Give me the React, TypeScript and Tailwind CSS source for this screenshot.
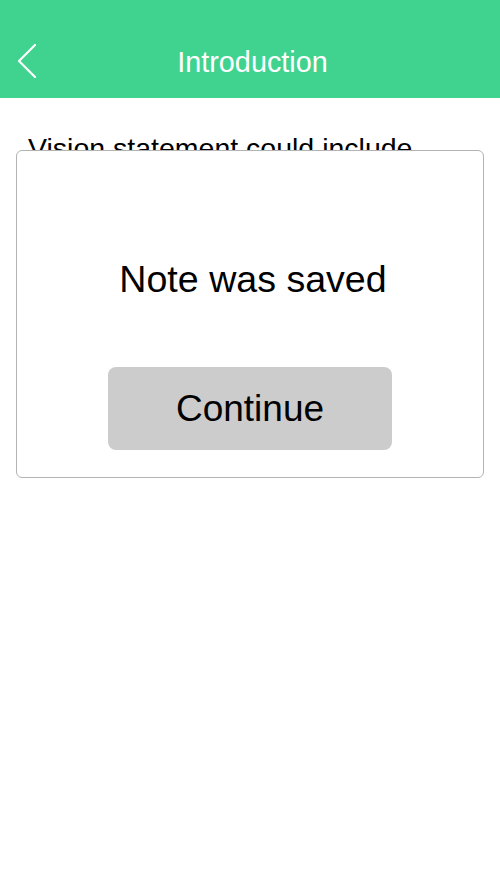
import React from "react";

function BackChevron() {
  return (
    <svg width="24" height="36" viewBox="0 0 24 36" fill="none" className="block">
      <polyline
        points="19,2 3,18 19,34"
        stroke="white"
        strokeWidth="2.2"
        strokeLinecap="round"
        strokeLinejoin="round"
      />
    </svg>
  );
}

export default function App() {
  return (
    <div
      className="relative w-[500px] h-[888px] overflow-hidden bg-white"
      style={{ fontFamily: '"Liberation Sans", Arial, sans-serif' }}
    >
      {/* header */}
      <header className="relative flex h-[98px] items-center justify-center bg-[#3fd38f] pt-[27px] pl-[5px]">
        <button className="absolute left-4 top-[43px]" aria-label="Back">
          <BackChevron />
        </button>
        <h1 className="text-[28.8px] leading-none text-white">Introduction</h1>
      </header>

      {/* page content behind the dialog */}
      <main className="px-7 pt-9">
        <p className="text-[28.5px] leading-[28px] text-black">
          Vision statement could include
        </p>
      </main>

      {/* dialog */}
      <div className="absolute left-4 right-4 top-[150px] rounded-md border border-[#b3b3b3] bg-white">
        <div className="flex flex-col items-center pt-[110px] pb-[27px]">
          <p className="ml-[6px] text-[37.6px] leading-[37px] text-black">Note was saved</p>
          <button className="mt-[69px] flex h-[83px] w-[284px] items-center justify-center rounded-lg bg-[#cccccc] text-[37px] leading-none text-black">
            Continue
          </button>
        </div>
      </div>
    </div>
  );
}
